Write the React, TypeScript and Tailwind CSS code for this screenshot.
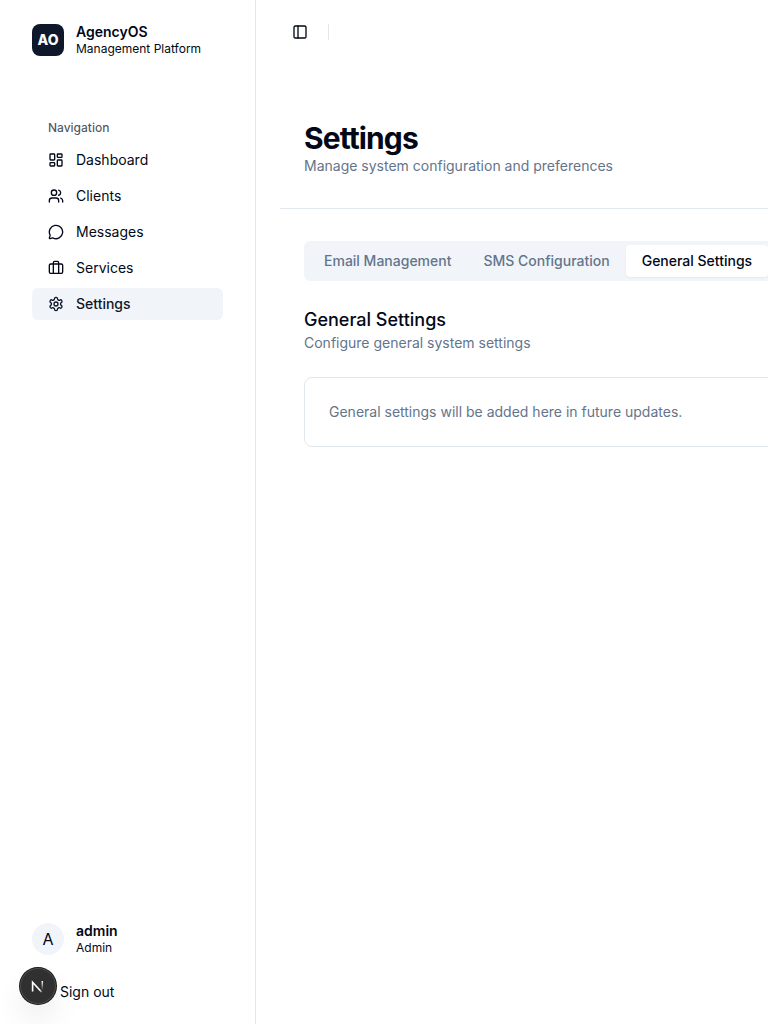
import type { SVGProps } from "react";
import { Briefcase, LayoutDashboard, MessageCircle, PanelLeft, Users } from "lucide-react";

function Gear(props: SVGProps<SVGSVGElement>) {
  return (
    <svg
      viewBox="0 0 24 24"
      fill="none"
      stroke="currentColor"
      strokeWidth="2"
      strokeLinecap="round"
      strokeLinejoin="round"
      {...props}
    >
      <path d="M12.22 2h-.44a2 2 0 0 0-2 2v.18a2 2 0 0 1-1 1.73l-.43.25a2 2 0 0 1-2 0l-.15-.08a2 2 0 0 0-2.73.73l-.22.38a2 2 0 0 0 .73 2.73l.15.1a2 2 0 0 1 1 1.72v.51a2 2 0 0 1-1 1.74l-.15.09a2 2 0 0 0-.73 2.73l.22.38a2 2 0 0 0 2.73.73l.15-.08a2 2 0 0 1 2 0l.43.25a2 2 0 0 1 1 1.73V20a2 2 0 0 0 2 2h.44a2 2 0 0 0 2-2v-.18a2 2 0 0 1 1-1.73l.43-.25a2 2 0 0 1 2 0l.15.08a2 2 0 0 0 2.73-.73l.22-.39a2 2 0 0 0-.73-2.73l-.15-.08a2 2 0 0 1-1-1.74v-.5a2 2 0 0 1 1-1.74l.15-.09a2 2 0 0 0 .73-2.73l-.22-.38a2 2 0 0 0-2.73-.73l-.15.08a2 2 0 0 1-2 0l-.43-.25a2 2 0 0 1-1-1.73V4a2 2 0 0 0-2-2z" />
      <circle cx="12" cy="12" r="3" />
    </svg>
  );
}

const items = [
  { label: "Dashboard", icon: LayoutDashboard },
  { label: "Clients", icon: Users },
  { label: "Messages", icon: MessageCircle },
  { label: "Services", icon: Briefcase },
  { label: "Settings", icon: Gear, active: true },
];

function Sidebar() {
  return (
    <aside className="flex w-64 shrink-0 flex-col border-r border-[#e2e8f0] bg-white">
      <div className="flex items-center gap-3 px-8 pt-[23px]">
        <div className="flex size-8 items-center justify-center rounded-lg bg-[#0f172a] text-sm font-extrabold text-[#f8fafc]">
          AO
        </div>
        <div className="flex flex-col">
          <span className="text-sm leading-[17.5px] font-semibold">AgencyOS</span>
          <span className="text-xs leading-4">Management Platform</span>
        </div>
      </div>
      <nav className="mt-[55.5px] px-8">
        <div className="flex h-8 items-center px-4 text-xs font-medium text-[#020817]/70">Navigation</div>
        <ul className="flex flex-col gap-1">
          {items.map(({ label, icon: Icon, active }) => (
            <li key={label}>
              <button
                className={
                  active
                    ? "flex h-8 w-full items-center gap-3 rounded-md bg-[#f1f5f9] px-4 text-sm font-medium text-[#0f172a]"
                    : "flex h-8 w-full items-center gap-3 rounded-md px-4 text-sm"
                }
              >
                <Icon className="size-4" />
                <span>{label}</span>
              </button>
            </li>
          ))}
        </ul>
      </nav>
      <div className="mt-auto px-8 pb-4">
        <div className="flex items-center gap-3">
          <div className="flex size-8 items-center justify-center rounded-full bg-[#f1f5f9]">A</div>
          <div className="flex flex-col">
            <span className="text-sm leading-[17.5px] font-semibold">admin</span>
            <span className="text-xs leading-4">Admin</span>
          </div>
        </div>
        <button className="mt-[20.25px] flex h-8 items-center pl-7 text-sm">Sign out</button>
      </div>
    </aside>
  );
}

function DevBadge() {
  return (
    <div className="absolute top-[968px] left-[20px] flex size-9 items-center justify-center rounded-full bg-[#303030] shadow-[0_0_0_1px_#171717,inset_0_0_0_1px_rgba(255,255,255,0.14),0_16px_32px_-8px_rgba(0,0,0,0.24)]">
      <svg width="36" height="36" viewBox="1 1 36 36" fill="none">
        <defs>
          <linearGradient id="diagonal" x1="18" y1="18" x2="24.5" y2="25" gradientUnits="userSpaceOnUse">
            <stop stopColor="white" />
            <stop offset="0.6" stopColor="white" />
            <stop offset="1" stopColor="white" stopOpacity="0" />
          </linearGradient>
          <linearGradient id="stem" x1="23.3" y1="14" x2="23.3" y2="23" gradientUnits="userSpaceOnUse">
            <stop stopColor="white" />
            <stop offset="1" stopColor="white" stopOpacity="0" />
          </linearGradient>
        </defs>
        <path d="M13.6 24.4V15.2L22.8 25.2" stroke="url(#diagonal)" strokeWidth="1.6" />
        <path d="M23.3 14V23.5" stroke="url(#stem)" strokeWidth="1.5" />
      </svg>
    </div>
  );
}

export default function App() {
  return (
    <div className="relative flex h-screen w-full overflow-hidden bg-white font-['Inter',sans-serif] text-[#020817] antialiased">
      <Sidebar />
      <main className="flex min-w-0 flex-1 flex-col overflow-hidden">
        <header className="flex h-16 shrink-0 items-center px-6">
          <button className="flex size-10 items-center justify-center" aria-label="Toggle sidebar">
            <PanelLeft className="size-4" />
          </button>
          <div className="ml-2 h-4 w-px bg-[#e2e8f0]" />
        </header>
        <div className="w-[640px] pl-6">
          <div className="h-[145px] border-b border-[#e2e8f0] px-6 pt-14">
            <h1 className="text-[30px] leading-9 font-bold tracking-[-0.9px]">Settings</h1>
            <p className="text-sm text-[#64748b]">Manage system configuration and preferences</p>
          </div>
          <div className="px-6 pt-8">
            <div className="flex h-10 w-[472px] items-center rounded-md bg-[#f1f5f9] p-1 text-sm font-medium text-[#64748b]">
              <button className="h-8 px-4 whitespace-nowrap">Email Management</button>
              <button className="h-8 px-4 whitespace-nowrap">SMS Configuration</button>
              <button className="h-8 rounded-sm bg-white px-4 whitespace-nowrap text-[#020817] shadow-xs">
                General Settings
              </button>
            </div>
            <h2 className="mt-[25px] text-lg leading-[27px] font-medium">General Settings</h2>
            <p className="text-sm text-[#64748b]">Configure general system settings</p>
            <div className="mt-6 rounded-lg border border-[#e2e8f0] p-6 text-sm text-[#64748b]">
              General settings will be added here in future updates.
            </div>
          </div>
        </div>
      </main>
      <DevBadge />
    </div>
  );
}
